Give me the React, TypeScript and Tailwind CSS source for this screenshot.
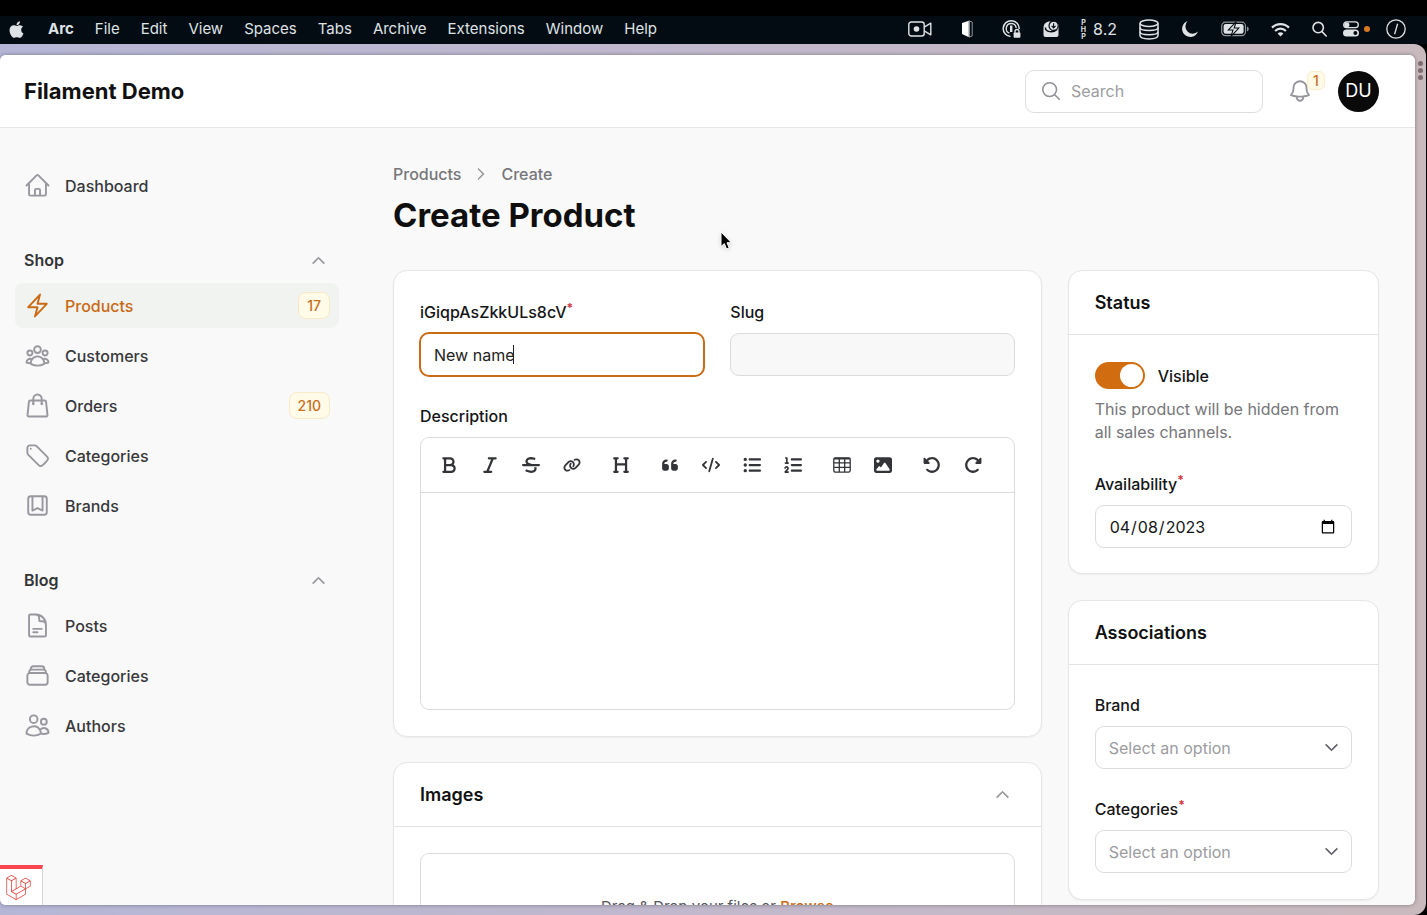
import React from "react";
import {
  HiOutlineHome,
  HiOutlineBolt,
  HiOutlineUserGroup,
  HiOutlineShoppingBag,
  HiOutlineTag,
  HiOutlineBookmarkSquare,
  HiOutlineDocumentText,
  HiOutlineRectangleStack,
  HiOutlineUsers,
  HiOutlineBell,
  HiOutlineMagnifyingGlass,
  HiChevronUp,
  HiChevronRight,
  HiChevronDown,
} from "react-icons/hi2";
import {
  FaBold,
  FaItalic,
  FaStrikethrough,
  FaLink,
  FaHeading,
  FaQuoteLeft,
  FaCode,
  FaListUl,
  FaListOl,
  FaImage,
  FaRotateLeft,
  FaRotateRight,
  FaApple,
} from "react-icons/fa6";
import { SiLaravel } from "react-icons/si";

type IconType = React.ComponentType<{ className?: string }>;

const menus = ["File", "Edit", "View", "Spaces", "Tabs", "Archive", "Extensions", "Window", "Help"];

function MenuBar() {
  return (
    <div className="mt-4 flex h-7 shrink-0 items-center justify-between bg-[#030c13] pb-[2px] pl-[7px] pr-[21px] text-[#dfe2e4]">
      <nav className="flex items-center gap-[21px] text-[15px] leading-5">
        <button aria-label="Apple" className="mr-1 w-4">
          <FaApple className="size-[19px]" />
        </button>
        <button className="font-bold">Arc</button>
        {menus.map((m) => (
          <button key={m}>{m}</button>
        ))}
      </nav>
      <div className="flex items-center gap-[22px]">
        <svg width="24" height="16" viewBox="0 0 24 16" fill="none" stroke="currentColor" strokeWidth="1.4">
          <rect x="0.8" y="1" width="15.4" height="14" rx="2.5" />
          <circle cx="8.5" cy="8" r="2.8" fill="currentColor" stroke="none" />
          <path d="M16.2 6.2 L22.8 2.2 V13.8 L16.2 9.8" strokeLinejoin="round" />
        </svg>
        <svg width="26" height="18" viewBox="0 0 26 18">
          <path d="M8 3 L15.5 0.5 V17.5 L8 14 Z" fill="#fff" />
          <path d="M15 1 L18.2 2 V16 L15 17 Z" fill="none" stroke="#8d9397" strokeWidth="1" />
        </svg>
        <svg width="19" height="20" viewBox="0 0 19 20" fill="none" stroke="currentColor">
          <path d="M8.5 17.6 A8 8 0 1 1 17.2 10" strokeWidth="1.5" />
          <path d="M7.4 14.2 A5 5 0 1 1 14.2 9" strokeWidth="1.4" />
          <path d="M9.2 6.5 V13" strokeWidth="2.4" />
          <path d="M13 14 V12.5 A2 2 0 0 1 17 12.5 V14" strokeWidth="1.3" />
          <rect x="11.6" y="13.4" width="6.8" height="5.4" rx="0.8" fill="currentColor" stroke="none" />
        </svg>
        <svg width="16" height="18" viewBox="0 0 16 18">
          <path d="M0.5 8 C0.5 4 3 1.6 7 1.6 L15.5 4 V15 Q15.5 17 13.5 17 H2.5 Q0.5 17 0.5 15 Z" fill="currentColor" />
          <path d="M2.4 7.4 C2.4 12.4 10 13 14 9.4" fill="none" stroke="#030c13" strokeWidth="1.4" />
          <circle cx="10.6" cy="5.8" r="4.6" fill="currentColor" stroke="#030c13" strokeWidth="1.2" />
          <path d="M10.6 3.2 V7.6 M8.6 5.9 L10.6 7.9 L12.6 5.9" fill="none" stroke="#030c13" strokeWidth="1.1" />
        </svg>
        <span className="flex items-center gap-[7px]">
          <span className="flex flex-col items-center text-[7px] font-bold leading-[7px]">
            <span>P</span>
            <span>H</span>
            <span>P</span>
          </span>
          <span className="text-base leading-5">8.2</span>
        </span>
        <svg width="20" height="21" viewBox="0 0 20 21" fill="none" stroke="currentColor" strokeWidth="1.5">
          <ellipse cx="10" cy="4.2" rx="9" ry="3.2" />
          <path d="M1 4.2 V16.6 C1 18.6 5 19.9 10 19.9 S19 18.6 19 16.6 V4.2" />
          <path d="M1 8.6 C1 10.4 5 11.6 10 11.6 S19 10.4 19 8.6" />
          <path d="M1 12.8 C1 14.6 5 15.8 10 15.8 S19 14.6 19 12.8" />
        </svg>
        <svg width="18" height="18" viewBox="1 0 18 18">
          <path d="M7.6 1 A8.2 8.2 0 1 0 18 11.6 A7.4 7.4 0 0 1 7.6 1 Z" fill="currentColor" />
        </svg>
        <svg width="28" height="16" viewBox="0 0 28 16">
          <rect x="0.7" y="1.2" width="23.8" height="13.4" rx="3.8" fill="none" stroke="#8f9598" strokeWidth="1.2" />
          <rect x="2.6" y="3.1" width="20" height="9.6" rx="2.2" fill="currentColor" />
          <path d="M26 5.4 Q27.8 6 27.8 7.9 Q27.8 9.8 26 10.4 Z" fill="#8f9598" />
          <path d="M15.2 0.6 L7.4 9 H12 L10 15.4 L17.8 7 H13.2 Z" fill="currentColor" stroke="#030c13" strokeWidth="1.1" />
        </svg>
        <svg width="19" height="15" viewBox="0 0 19 15" fill="none" stroke="currentColor" strokeWidth="2.2">
          <path d="M1 5.6 A12 12 0 0 1 18 5.6" />
          <path d="M4.1 8.9 A7.6 7.6 0 0 1 14.9 8.9" />
          <path d="M9.5 14.6 L6.6 11.6 A4.2 4.2 0 0 1 12.4 11.6 Z" fill="currentColor" stroke="none" />
        </svg>
        <span className="flex items-center gap-4">
          <svg width="15" height="16" viewBox="0 0 15 16" fill="none" stroke="currentColor" strokeWidth="1.6">
            <circle cx="6.2" cy="6.6" r="5.2" />
            <path d="M10 10.6 L14.2 15" strokeLinecap="round" />
          </svg>
          <span className="flex items-center gap-[5px]">
            <svg width="16" height="16" viewBox="0 0 16 16">
              <rect x="0.7" y="0.9" width="14.6" height="5.8" rx="2.9" fill="none" stroke="currentColor" strokeWidth="1.3" />
              <circle cx="3.8" cy="3.8" r="2.6" fill="currentColor" />
              <rect x="0" y="8.6" width="16" height="7" rx="3.5" fill="currentColor" />
              <circle cx="12.4" cy="12.1" r="2" fill="#030c13" />
            </svg>
            <span className="size-[6px] rounded-full bg-[#d9771f]" />
          </span>
          <svg width="20" height="20" viewBox="0 0 20 20" fill="none" stroke="currentColor" strokeWidth="1.3">
            <circle cx="10" cy="10" r="9.2" />
            <path d="M11.6 4.8 L8.6 15.2" />
          </svg>
        </span>
      </div>
    </div>
  );
}

function Badge({ children }: { children: React.ReactNode }) {
  return (
    <span className="flex h-[27px] items-center rounded-lg border border-[#fbe8c6] bg-[#fffbe8] px-2 text-sm font-medium text-[#c8701f]">
      {children}
    </span>
  );
}

function NavItem({ icon: Icon, label, badge, active }: { icon: IconType; label: string; badge?: string; active?: boolean }) {
  return (
    <li>
      <a
        href="#"
        className={
          active
            ? "flex h-[45px] items-center gap-[14px] rounded-lg bg-[#f1f3f1] px-[9px] text-[#c96a15]"
            : "flex h-[45px] items-center gap-[14px] rounded-lg px-[9px] text-[#38383b]"
        }
      >
        <Icon className={active ? "size-[27px] stroke-[1.7]" : "size-[27px] stroke-[1.7] text-[#98989f]"} />
        <span className="flex-1 text-base font-medium">{label}</span>
        {badge && <Badge>{badge}</Badge>}
      </a>
    </li>
  );
}

function NavGroup({ title, children }: { title: string; children: React.ReactNode }) {
  return (
    <section className="flex flex-col gap-2">
      <button className="flex h-[30px] items-center justify-between pl-[9px] pr-3 text-base font-semibold text-[#333336]">
        {title}
        <HiChevronUp className="size-[17px] stroke-current stroke-1 text-[#8f8f96]" />
      </button>
      <ul className="flex flex-col gap-[5px]">{children}</ul>
    </section>
  );
}

function Sidebar() {
  return (
    <aside className="flex w-[357px] shrink-0 flex-col gap-[37px] pl-[15px] pr-[18px] pt-[35px]">
      <ul>
        <NavItem icon={HiOutlineHome} label="Dashboard" />
      </ul>
      <NavGroup title="Shop">
        <NavItem icon={HiOutlineBolt} label="Products" badge="17" active />
        <NavItem icon={HiOutlineUserGroup} label="Customers" />
        <NavItem icon={HiOutlineShoppingBag} label="Orders" badge="210" />
        <NavItem icon={HiOutlineTag} label="Categories" />
        <NavItem icon={HiOutlineBookmarkSquare} label="Brands" />
      </NavGroup>
      <NavGroup title="Blog">
        <NavItem icon={HiOutlineDocumentText} label="Posts" />
        <NavItem icon={HiOutlineRectangleStack} label="Categories" />
        <NavItem icon={HiOutlineUsers} label="Authors" />
      </NavGroup>
    </aside>
  );
}

function Header() {
  return (
    <header className="flex h-[73px] shrink-0 items-center justify-between border-b border-[#e6e6e6] bg-white pl-6 pr-9">
      <a href="#" className="text-[22px] font-bold text-[#111]">
        Filament Demo
      </a>
      <div className="flex items-center">
        <label className="flex h-[43px] w-[238px] items-center gap-[9px] rounded-[9px] border border-[#dedede] px-[14px]">
          <HiOutlineMagnifyingGlass className="size-[22px] shrink-0 stroke-[1.7] text-[#8f8f96]" />
          <input
            type="search"
            placeholder="Search"
            aria-label="Search"
            className="w-full min-w-0 bg-transparent text-base text-[#222] outline-none placeholder:text-[#9c9c9f]"
          />
        </label>
        <button aria-label="Notifications" className="relative ml-6 mr-[25px]">
          <HiOutlineBell className="size-[26px] stroke-[1.7] text-[#95959c]" />
          <span className="absolute -top-[7px] left-5 flex h-[19px] w-[18px] items-center justify-center rounded-md border border-[#fbecc9] bg-[#fffbe8] text-sm font-medium text-[#c8701f]">
            1
          </span>
        </button>
        <button aria-label="Account" className="size-[41px] rounded-full bg-[#0a0a0b] text-lg text-white">
          DU
        </button>
      </div>
    </header>
  );
}

const cardClass = "rounded-[14px] border border-[#e6e6e6] bg-white shadow-[0_1px_2px_rgba(0,0,0,0.05)]";
const fieldClass = "h-[43px] w-full rounded-[9px] border border-[#dcdcdc] px-[13px] text-base";

function Label({ htmlFor, required, children }: { htmlFor: string; required?: boolean; children: React.ReactNode }) {
  return (
    <label htmlFor={htmlFor} className="mb-2 flex h-[27px] items-center text-base font-medium text-[#151517]">
      <span>
        {children}
        {required && <sup className="text-xs font-bold text-[#d0353b]">*</sup>}
      </span>
    </label>
  );
}

function SelectField({ id, label, required }: { id: string; label: string; required?: boolean }) {
  return (
    <div>
      <Label htmlFor={id} required={required}>
        {label}
      </Label>
      <div className="relative">
        <select id={id} className={fieldClass + " appearance-none bg-white text-[#9c9c9f] outline-none"}>
          <option>Select an option</option>
        </select>
        <HiChevronDown className="pointer-events-none absolute right-3 top-[13px] size-[17px] stroke-current stroke-1 text-[#55575e]" />
      </div>
    </div>
  );
}

function TableIcon({ className }: { className?: string }) {
  return (
    <svg viewBox="0 0 18 16" className={className} fill="none" stroke="currentColor" strokeWidth="1.3">
      <rect x="0.8" y="0.8" width="16.4" height="14.4" rx="1.8" />
      <path d="M0.8 1.6 H17.2" strokeWidth="1.8" />
      <path d="M0.8 5.8 H17.2 M0.8 10.4 H17.2 M6.3 1 V15 M11.7 1 V15" />
    </svg>
  );
}

const tools: { name: string; icon: IconType }[][] = [
  [
    { name: "Bold", icon: FaBold },
    { name: "Italic", icon: FaItalic },
    { name: "Strikethrough", icon: FaStrikethrough },
    { name: "Link", icon: FaLink },
  ],
  [{ name: "Heading", icon: FaHeading }],
  [
    { name: "Quote", icon: FaQuoteLeft },
    { name: "Code", icon: FaCode },
    { name: "Bullet list", icon: FaListUl },
    { name: "Numbered list", icon: FaListOl },
  ],
  [
    { name: "Table", icon: TableIcon },
    { name: "Image", icon: FaImage },
  ],
  [
    { name: "Undo", icon: FaRotateLeft },
    { name: "Redo", icon: FaRotateRight },
  ],
];

function ProductForm() {
  return (
    <section className={cardClass + " flex flex-col gap-[26px] px-[26px] pb-[26px] pt-[27px]"}>
      <div className="grid grid-cols-2 gap-[26px]">
        <div>
          <Label htmlFor="name" required>
            iGiqpAsZkkULs8cV
          </Label>
          <div className="relative">
            <input
              id="name"
              defaultValue="New name"
              className="h-[43px] w-full rounded-[9px] px-[14px] text-base text-[#222] caret-transparent outline-2 -outline-offset-1 outline-[#c96a15]"
            />
            <span className="absolute left-[93px] top-3 h-[19px] w-px bg-[#222]" />
          </div>
        </div>
        <div>
          <Label htmlFor="slug">Slug</Label>
          <input id="slug" disabled className={fieldClass + " bg-[#f8f8f8]"} />
        </div>
      </div>
      <div>
        <Label htmlFor="description">Description</Label>
        <div className="overflow-hidden rounded-[9px] border border-[#dcdcdc]">
          <div className="flex h-[55px] items-center gap-[13px] border-b border-[#dcdcdc] px-[10px]">
            {tools.map((group, i) => (
              <div key={i} className="flex gap-[5px]">
                {group.map(({ name, icon: Icon }) => (
                  <button key={name} aria-label={name} className="flex h-9 w-9 items-center justify-center text-[#333438]">
                    <Icon className="size-[18px]" />
                  </button>
                ))}
              </div>
            ))}
          </div>
          <textarea id="description" className="block h-[216px] w-full resize-none p-[14px] text-base outline-none" />
        </div>
      </div>
    </section>
  );
}

function CardHeader({ title, collapsible }: { title: string; collapsible?: boolean }) {
  return (
    <div className="flex h-16 items-center justify-between border-b border-[#e2e2e2] px-[26px]">
      <h2 className="text-lg font-semibold text-[#111]">{title}</h2>
      {collapsible && (
        <button aria-label={"Collapse " + title} className="mr-1">
          <HiChevronUp className="size-[17px] stroke-current stroke-1 text-[#8f8f96]" />
        </button>
      )}
    </div>
  );
}

function Cursor() {
  return (
    <svg width="14" height="20" viewBox="0 0 14 20" className="absolute left-[720px] top-44 drop-shadow">
      <path
        d="M1 1 V15.6 L4.3 12.6 L6.6 18 L9.2 16.9 L7 11.7 H11.4 Z"
        fill="#000"
        stroke="#fff"
        strokeWidth="1"
      />
    </svg>
  );
}

export default function App() {
  return (
    <div className="flex h-screen flex-col overflow-hidden bg-black font-[Inter,sans-serif]">
      <MenuBar />
      <div className="relative mr-px flex min-h-0 flex-1 rounded-r-xl bg-linear-to-r from-[#b5b6d6] via-[#c1b8cc] to-[#c9babe] pb-[10px] pt-[11px]">
        <div className="relative flex min-w-0 flex-1 flex-col overflow-hidden rounded-md bg-[#f9f9f9] shadow-[0_0_4px_rgba(0,0,0,0.35)]">
          <Header />
          <div className="flex min-h-0 flex-1">
            <Sidebar />
            <main className="min-w-0 flex-1 px-9 pt-[34px]">
              <nav className="flex items-center gap-3 text-base font-medium text-[#77777b]">
                <a href="#">Products</a>
                <HiChevronRight className="size-4 stroke-current stroke-1 text-[#8f8f96]" />
                <a href="#">Create</a>
              </nav>
              <h1 className="mb-[34px] mt-2 text-[33px] font-bold leading-[42px] text-[#0f0f10]">Create Product</h1>
              <div className="grid grid-cols-3 items-start gap-[26px]">
                <div className="col-span-2 flex flex-col gap-[25px]">
                  <ProductForm />
                  <section className={cardClass}>
                    <CardHeader title="Images" collapsible />
                    <div className="p-[26px]">
                      <div className="flex h-[109px] items-center justify-center rounded-[9px] border border-[#dcdcdc] text-[15px] text-[#55555a]">
                        <p>
                          Drag &amp; Drop your files or{" "}
                          <a href="#" className="font-medium text-[#c96a15]">
                            Browse
                          </a>
                        </p>
                      </div>
                    </div>
                  </section>
                </div>
                <div className="flex flex-col gap-[26px]">
                  <section className={cardClass}>
                    <CardHeader title="Status" />
                    <div className="px-[26px] pb-[25px] pt-[27px]">
                      <label className="flex h-[27px] items-center gap-[13px] text-base font-medium text-[#151517]">
                        <input type="checkbox" defaultChecked className="peer sr-only" />
                        <span className="flex h-[27px] w-[50px] items-center justify-end rounded-full bg-[#d16d10] p-0.5">
                          <span className="size-[23px] rounded-full bg-white" />
                        </span>
                        Visible
                      </label>
                      <p className="mb-[26px] mt-[9px] text-base leading-[23px] text-[#75757a]">
                        This product will be hidden from all sales channels.
                      </p>
                      <Label htmlFor="availability" required>
                        Availability
                      </Label>
                      <input
                        id="availability"
                        type="date"
                        defaultValue="2023-04-08"
                        className={fieldClass + " text-[#151517]"}
                      />
                    </div>
                  </section>
                  <section className={cardClass}>
                    <CardHeader title="Associations" />
                    <div className="flex flex-col gap-[26px] p-[26px]">
                      <SelectField id="brand" label="Brand" />
                      <SelectField id="categories" label="Categories" required />
                    </div>
                  </section>
                </div>
              </div>
            </main>
          </div>
          <a
            href="#"
            aria-label="Laravel debug bar"
            className="absolute bottom-0 left-0 flex h-10 w-[43px] items-center border-r border-t-4 border-r-[#d5d5d5] border-t-[#f9464f] bg-white pl-[6px]"
          >
            <SiLaravel className="size-[25px] text-[#e0493f]" />
          </a>
          <Cursor />
        </div>
        <div className="flex w-[11px] shrink-0 flex-col items-center gap-[2px] pt-[6px]">
          <span className="size-[5px] rounded-full bg-[#7b6e72]" />
          <span className="size-[5px] rounded-full bg-[#7b6e72]" />
          <span className="size-[5px] rounded-full bg-[#7b6e72]" />
        </div>
      </div>
    </div>
  );
}
